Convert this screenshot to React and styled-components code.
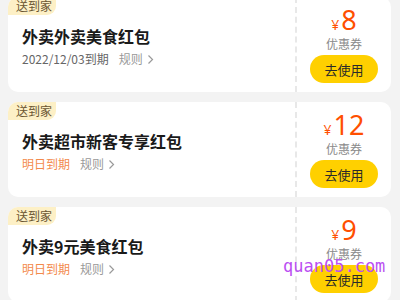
import React from 'react';
import styled, { createGlobalStyle } from 'styled-components';

const coupons = [
  { title: '外卖外卖美食红包', expire: '2022/12/03到期', soon: false, amount: '8' },
  { title: '外卖超市新客专享红包', expire: '明日到期', soon: true, amount: '12' },
  { title: '外卖9元美食红包', expire: '明日到期', soon: true, amount: '9' },
];

function Chevron() {
  return (
    <svg width="7" height="11" viewBox="0 0 7 11">
      <path d="M1.5 1.5 L5.5 5.5 L1.5 9.5" fill="none" stroke="#9a9a9a" strokeWidth="1.2" />
    </svg>
  );
}

export default function App() {
  return (
    <>
      <Global />
      <Page>
        <List>
          {coupons.map((c) => (
            <Card key={c.title}>
              <Info>
                <Tag>送到家</Tag>
                <Title>{c.title}</Title>
                <Meta>
                  <Expire $soon={c.soon}>{c.expire}</Expire>
                  <Rule>
                    规则 <Chevron />
                  </Rule>
                </Meta>
              </Info>
              <Side>
                <Amount>
                  <Yen>¥</Yen>
                  {c.amount}
                </Amount>
                <Label>优惠券</Label>
                <UseBtn>去使用</UseBtn>
              </Side>
            </Card>
          ))}
        </List>
        <Watermark>quan05.com</Watermark>
      </Page>
    </>
  );
}

const Global = createGlobalStyle`
  html, body {
    margin: 0;
    padding: 0;
    background: #f3f3f3;
    overflow: hidden;
  }
  body {
    font-family: "Noto Sans CJK SC", "Noto Sans", sans-serif;
  }
`;

const Page = styled.div`
  width: 400px;
  height: 300px;
  overflow: hidden;
  position: relative;
`;

const List = styled.div`
  display: flex;
  flex-direction: column;
  gap: 10px;
  margin-top: -3px;
  padding: 0 9px 0 8px;
`;

const Card = styled.div`
  display: flex;
  height: 95px;
  background: #fff;
  border-radius: 10px;
  overflow: hidden;
`;

const Info = styled.div`
  flex: 1;
  display: flex;
  flex-direction: column;
  align-items: flex-start;
`;

const Tag = styled.div`
  height: 18px;
  line-height: 18px;
  padding: 0 4px 0 8px;
  font-size: 12px;
  color: #6a5431;
  background: #fdf0c6;
  border-bottom-right-radius: 9px;
`;

const Title = styled.div`
  margin-top: 9px;
  padding-left: 14px;
  font-size: 16px;
  line-height: 24px;
  font-weight: 700;
  color: #1a1a1a;
`;

const Meta = styled.div`
  display: flex;
  align-items: center;
  gap: 10px;
  margin-top: 2px;
  padding-left: 14px;
  font-size: 12px;
  line-height: 18px;
`;

const Expire = styled.span`
  color: ${(p) => (p.$soon ? '#f38a4c' : '#666')};
`;

const Rule = styled.span`
  display: flex;
  align-items: center;
  gap: 4px;
  color: #999;
`;

const Side = styled.div`
  width: 96px;
  border-left: 2px dashed #e8e8e8;
  display: flex;
  flex-direction: column;
  align-items: center;
  padding-top: 10px;
  box-sizing: border-box;
`;

const Amount = styled.div`
  display: flex;
  align-items: baseline;
  gap: 2px;
  height: 26px;
  line-height: 26px;
  font-size: 27px;
  color: #ff4f00;
  font-family: "Noto Sans", sans-serif;
`;

const Yen = styled.span`
  font-size: 14px;
`;

const Label = styled.div`
  margin-top: 2px;
  line-height: 18px;
  font-size: 12px;
  color: #8a8a8a;
`;

const UseBtn = styled.button`
  margin-top: 2px;
  width: 68px;
  height: 28px;
  border: 0;
  border-radius: 14px;
  background: #ffd000;
  color: #2a2a2a;
  font-size: 13px;
  font-family: "Noto Sans CJK SC", sans-serif;
  padding: 0;
`;

const Watermark = styled.div`
  position: absolute;
  left: 283px;
  top: 256px;
  font-family: "DejaVu Sans Mono", monospace;
  font-size: 17px;
  line-height: 20px;
  color: #bb4ff2;
  pointer-events: none;
`;
